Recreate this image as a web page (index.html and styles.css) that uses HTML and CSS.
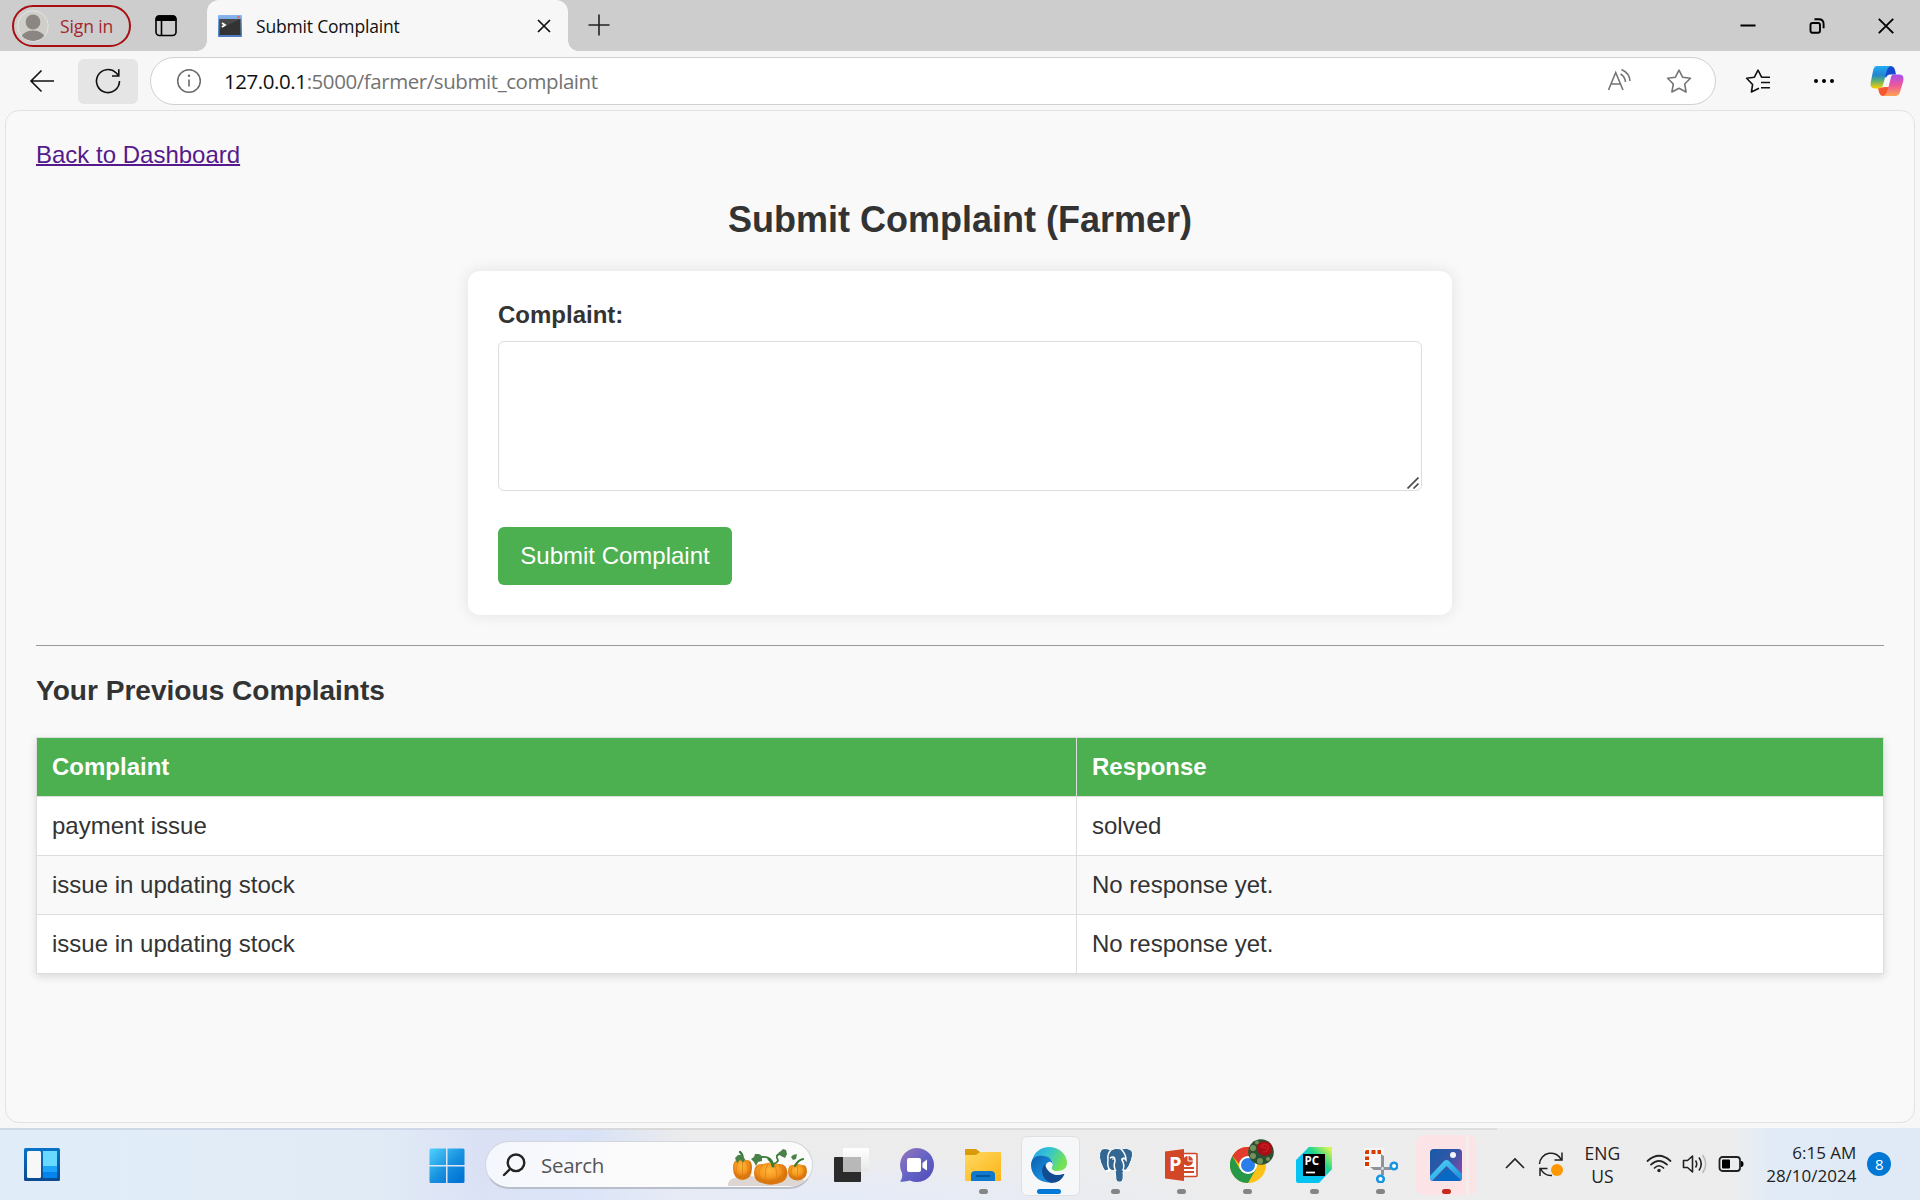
FILE: index.html
```html
<!DOCTYPE html>
<html lang="en">
<head>
<meta charset="utf-8">
<title>Submit Complaint</title>
<link rel="stylesheet" href="styles.css">
</head>
<body>
<header class="titlebar">
  <div class="signin">
    <svg class="avatar" width="32" height="32" viewBox="0 0 32 32"><defs><clipPath id="av"><circle cx="16" cy="16" r="15"/></clipPath></defs><circle cx="16" cy="16" r="15.3" fill="#d0cec9" stroke="#e6e4df"/><g clip-path="url(#av)" fill="#8b8682"><circle cx="16" cy="12" r="7.4"/><ellipse cx="16" cy="29" rx="12" ry="8.5"/></g></svg>
    <span class="ui signin-text">Sign in</span>
  </div>
  <svg class="tabs-icon" width="24" height="24" viewBox="0 0 24 24"><rect x="2" y="2" width="20" height="19.5" rx="3.5" fill="none" stroke="#000" stroke-width="1.6"/><path d="M1.5 7V5Q1.500 1.300 5 1.300H19Q22.500 1.300 22.500 5V7Z"/><path d="M7.500 6V21" stroke="#000" stroke-width="1.6"/></svg>
  <div class="tab">
    <svg width="24" height="22" viewBox="0 0 24 22"><defs><linearGradient id="fv" x2="0" y2="1"><stop stop-color="#88b8ee"/><stop offset="1" stop-color="#4878bc"/></linearGradient></defs><rect width="24" height="22" rx="1" fill="url(#fv)"/><rect x="1.500" y="4" width="21" height="16" fill="#333"/><path d="M1.500 4H22.500L1.500 14Z" fill="#484848"/><path d="M4 8L7 10L4 12" fill="none" stroke="#fff" stroke-width="1.800"/><circle cx="20.500" cy="2" r="1.200" fill="#df6264"/></svg>
    <span class="ui tab-title">Submit Complaint</span>
    <svg class="tab-close" width="16" height="16" viewBox="0 0 16 16"><path d="M2 2L14 14M14 2L2 14" stroke="#111" stroke-width="1.700"/></svg>
  </div>
  <svg class="plus" width="24" height="24" viewBox="0 0 24 24"><path d="M12 1.500V22.500M1.500 12H22.500" stroke="#222" stroke-width="1.600"/></svg>
  <div class="controls">
    <svg width="16" height="16" viewBox="0 0 16 16"><path d="M.5 7.500H15.500" stroke="#000" stroke-width="2"/></svg>
    <svg width="16" height="16" viewBox="0 0 16 16" fill="none" stroke="#000" stroke-width="1.900"><rect x="1.500" y="5" width="9.500" height="9.800" rx="2"/><path d="M5.500 1.300H9.800Q14.600 1.300 14.600 6V10.300"/></svg>
    <svg width="16" height="16" viewBox="0 0 16 16"><path d="M.8 .8L15.200 15.200M15.200 .8L.8 15.200" stroke="#000" stroke-width="1.900"/></svg>
  </div>
</header>

<nav class="toolbar">
  <svg class="back" width="26" height="24" viewBox="0 0 26 24" fill="none" stroke="#111" stroke-width="1.600"><path d="M25 12H2M12.500 1.500L2 12L12.500 22.500"/></svg>
  <div class="reload"><svg width="26" height="26" viewBox="0 0 26 26" fill="none" stroke="#111" stroke-width="1.600"><path d="M24.500 13A11.500 11.500 0 1 1 21 4.800L23.500 7.500M23.800 1.200V8H17"/></svg></div>
  <div class="address">
    <svg width="26" height="26" viewBox="0 0 26 26"><circle cx="13" cy="13" r="11.300" fill="none" stroke="#6a6a6a" stroke-width="1.500"/><path d="M13 11.500V18.500" stroke="#6a6a6a" stroke-width="1.600"/><circle cx="13" cy="7.800" r="1.200" fill="#6a6a6a"/></svg>
    <span class="ui url"><b>127.0.0.1</b>:5000/farmer/submit_complaint</span>
    <svg class="read" width="26" height="26" viewBox="0 0 26 26" fill="none" stroke="#747474" stroke-width="1.600"><path d="M1.500 22L8.700 4.500L16 22M4.200 16H13.400M13.500 6Q18 8.500 18.500 14M14.500 1.500Q22.500 5 23 13"/></svg>
    <svg width="26" height="26" viewBox="0 0 26 26" fill="none" stroke="#747474" stroke-width="1.600" stroke-linejoin="round"><path d="M13 2.200L16.600 9.200L24.400 10.300L18.700 16L20.100 24L13 20.300L5.900 24L7.300 16L1.600 10.300L9.400 9.200Z"/></svg>
  </div>
  <svg class="favs" width="26" height="26" viewBox="0 0 26 26" fill="none" stroke="#111" stroke-width="1.600" stroke-linejoin="round"><path d="M14 20.300L6.400 24L7.600 16.500L1.600 10.300L9.400 9.200L13 2.200L16.600 9.200H25M16 14.500H25M16 19.800H25"/></svg>
  <svg class="dots" width="22" height="6" viewBox="0 0 22 6"><circle cx="3" cy="3" r="2"/><circle cx="11" cy="3" r="2"/><circle cx="19" cy="3" r="2"/></svg>
  <svg class="copilot" width="34" height="32" viewBox="0 0 34 32"><defs><linearGradient id="c1" x2="0" y2="1"><stop stop-color="#21adf3"/><stop offset=".4" stop-color="#2384cf"/><stop offset=".65" stop-color="#5caf73"/><stop offset="1" stop-color="#ffcf00"/></linearGradient><linearGradient id="c2" x2="0" y2="1"><stop stop-color="#a650ee"/><stop offset=".5" stop-color="#ef579b"/><stop offset="1" stop-color="#ffa34f"/></linearGradient></defs><path d="M7 1H20Q24 1 25 5L26 9.500H20Q17 9.500 16 13L14 10Z" fill="#1649ce"/><path d="M8 23L15 22H19L16 31H13Q10 31 9 27Z" fill="#f5582f"/><path d="M7 1H21Q17.500 2 16.500 7L13 20Q12 23.500 8 23.500H5Q-1 23.500 1 16L3 6Q4 1 7 1Z" fill="url(#c1)"/><path d="M23 9.500H29Q35 9.500 33 17L30 27Q29 31 25 31H13Q16 30 17.500 26L21 12Q22 9.500 23 9.500Z" fill="url(#c2)"/></svg>
</nav>

<main class="page">
  <div><a class="back-link" href="#">Back to Dashboard</a></div>
  <h2 class="title">Submit Complaint (Farmer)</h2>
  <form class="card">
    <label class="label" for="complaint">Complaint:</label>
    <div class="field"><textarea id="complaint" class="textarea"></textarea>
      <svg class="grip" width="12" height="12" viewBox="0 0 12 12"><path d="M.5 11.500L11.500 .5M6.500 11.500L11.500 6.500" stroke="#4d4d4d" stroke-width="1.700"/></svg></div>
    <button class="submit" type="button">Submit Complaint</button>
  </form>
  <hr class="rule">
  <h3 class="subtitle">Your Previous Complaints</h3>
  <table class="table">
    <thead><tr><th class="col-complaint">Complaint</th><th>Response</th></tr></thead>
    <tbody>
      <tr><td>payment issue</td><td>solved</td></tr>
      <tr><td>issue in updating stock</td><td>No response yet.</td></tr>
      <tr><td>issue in updating stock</td><td>No response yet.</td></tr>
    </tbody>
  </table>
</main>

<footer class="taskbar">
  <svg class="widgets" width="36" height="33" viewBox="0 0 36 33"><defs><linearGradient id="w1" x2="0" y2="1"><stop stop-color="#0873c9"/><stop offset="1" stop-color="#0c4a90"/></linearGradient></defs><rect width="36" height="33" rx="1.500" fill="url(#w1)"/><rect x="3" y="3" width="14" height="27" rx="1.500" fill="#f7f7f7"/><path d="M19 3H33V18H19Z" fill="#68d9ff"/><path d="M19 18H33V24H19Z" fill="#1ba4fa"/><path d="M19 24H33V30H19Z" fill="#0584ee"/></svg>
  <svg class="start" width="36" height="36" viewBox="0 0 36 36"><defs><linearGradient id="s1" gradientUnits="userSpaceOnUse" x2="30" y2="32"><stop stop-color="#50d3fd"/><stop offset=".6" stop-color="#1791df"/><stop offset="1" stop-color="#0276d5"/></linearGradient></defs><path fill="url(#s1)" d="M2 .5H17V17H.5V2Q.5 .5 2 .5ZM18.500 .5H34Q35.500 .5 35.500 2V17H18.500ZM.5 18.500H17V35H2Q.5 35 .5 33.500ZM18.500 18.500H35.500V33.500Q35.500 35 34 35H18.500Z"/></svg>
  <div class="search">
    <svg class="magnifier" width="24" height="24" viewBox="0 0 24 24" fill="none" stroke="#222" stroke-width="2.400" stroke-linecap="round"><circle cx="14" cy="9.800" r="8.300"/><path d="M8 16L2 22"/></svg>
    <span class="ui search-text">Search</span>
    <svg class="pumpkins" width="80" height="40" viewBox="0 0 80 40"><defs><radialGradient id="pk" cx=".45" cy=".35"><stop stop-color="#ffb73c"/><stop offset=".65" stop-color="#f6981f"/><stop offset="1" stop-color="#d9740e"/></radialGradient></defs><path d="M0 39Q0 31 8 31Q12 26 22 28L30 32L54 25Q64 24 66 31Q75 31 77 34Q72 39 64 39Z" fill="#ddd6d2"/><path d="M5 21Q5 12 11 13Q14 10 18 13Q24 12 24 21Q24 32 14.500 33Q5 32 5 21Z" fill="url(#pk)"/><path d="M60 25Q60 17 65 18Q69 16 74 18Q79 17 79 25Q78 33 69.500 33.500Q61 33 60 25Z" fill="url(#pk)"/><path d="M26 26Q26 16 35 17Q42 14 50 17Q59 16 59.500 26Q59 35 50 36.500Q42 39 34 36Q26 34 26 26Z" fill="url(#pk)"/><g fill="none" stroke="#df8216" stroke-width=".8"><path d="M11 13Q6 22 11 32M17 13Q23 22 18 32M14.500 12V33M65 18Q61 25 66 33M74 18Q78 25 73 33M69.500 17V33M35 17Q27 26 35 36M40 17Q35 26 39 37M46 17Q51 26 47 37M51 17Q59 26 51 36"/></g><g fill="none" stroke="#377b37" stroke-width="2.200" stroke-linecap="round"><path d="M15 14Q15 7 12 5M67 19Q70 13 75 12"/><path d="M45 18Q43 9 34 10M45 17Q52 15 49 11Q48 7 53 7" stroke-width="1.800"/><path d="M45 19Q44 14 41 12" stroke-width="3"/></g><path d="M7 11L10 8L13 8L17 12L16 15L12 13L9 16ZM23 12L26 10L27 7L31 7L34 9L34 14L30 15L28 19L26 15ZM50 6L53 4L55 2L58 3L59 7L57 11L53 9ZM63 10L65 8L69 7L68 12L65 13Z" fill="#4a8148"/></svg>
  </div>
  <div class="apps">
    <div class="app"><svg width="36" height="36" viewBox="0 0 36 36"><defs><linearGradient id="tv" x2="0" y2="1"><stop stop-color="#fff"/><stop offset="1" stop-color="#e7e7e7"/></linearGradient></defs><rect x="1" y="10" width="27" height="25" rx="1" fill="#2b2b2b"/><rect x="10" y="1" width="26" height="24" rx="1" fill="url(#tv)"/><path d="M10 10H28V25H10Z" fill="#b8b8b8"/></svg></div>
    <div class="app"><svg width="36" height="36" viewBox="0 0 36 36"><defs><linearGradient id="tm" x2="1" y2="1"><stop stop-color="#9a74b8"/><stop offset=".5" stop-color="#6464c6"/><stop offset="1" stop-color="#5049b8"/></linearGradient></defs><path d="M18 1A17 17 0 1 1 11 33.500Q6 35 1 34.500Q4 31 3 26A17 17 0 0 1 18 1Z" fill="url(#tm)"/><rect x="8" y="11" width="14" height="14" rx="2" fill="#fff"/><path d="M23.500 16L28 12.500V23.500L23.500 20.500Z" fill="#fff"/></svg></div>
    <div class="app running"><svg width="36" height="36" viewBox="0 0 36 36"><defs><linearGradient id="fd" x2="1" y2="1"><stop stop-color="#ffd963"/><stop offset="1" stop-color="#fcb414"/></linearGradient></defs><path d="M0 3Q0 2 1 2H11L15 5V12H0Z" fill="#d99b09"/><path d="M0 8H11L15 5H35Q36 5 36 6V33Q36 34 35 34H1Q0 34 0 33Z" fill="url(#fd)"/><path d="M6 34V28Q6 24 10 24H26Q30 24 30 28V34Z" fill="#1179cb"/><path d="M11 29H25" stroke="#07569c" stroke-width="2"/></svg></div>
    <div class="app active"><svg width="36" height="36" viewBox="0 0 36 36"><defs><linearGradient id="e1" x2="1" y2=".4"><stop stop-color="#269fe9"/><stop offset=".5" stop-color="#35c5cf"/><stop offset="1" stop-color="#72e352"/></linearGradient><linearGradient id="e2" x2="1" y2="1"><stop stop-color="#0b5fad"/><stop offset=".6" stop-color="#1789d8"/></linearGradient></defs><path d="M1 14C3 5 10 0 18 0C28 0 36 7 36 16C36 21 32 24 26 24C22 24 20 22 21 20C23 17 22 12 17 11C11 8 5 9 1 14Z" fill="url(#e1)"/><path d="M0 18C0 11 6 8 12 9C18 9 22 13 22 18C20 12 15 15 14 20C13 28 19 34 25 34C12 39 0 30 0 18Z" fill="url(#e2)"/><path d="M14 17C8 23 12 33 20 36C26 36 31 33 33 28C34 27 33 27 32 27C26 30 16 27 14 17Z" fill="#124b91"/></svg></div>
    <div class="app running"><svg width="36" height="36" viewBox="0 0 36 36"><g fill="#336791" stroke="#fff" stroke-width="1"><path d="M13 3Q6 0 3 3Q-1 9 5 21Q7 26 11 22Q16 25 17 23L18 33Q19 36 23 35Q26 34 25 25Q28 24 31 19Q37 6 33 3Q29 0 23 2Q18 0 13 3Z"/><path d="M13 3Q9 7 10 13Q9 20 12 23Q8 25 9 24M12 11Q17 8 17 14Q15 20 18 24M23 2Q28 7 28 13Q25 9 24 13Q27 18 25 23Q31 25 32 22" fill="none" stroke-width="1.500"/><path d="M14 12H17M23 12H26"/></g></svg></div>
    <div class="app running"><svg width="36" height="36" viewBox="0 0 36 36"><path d="M18 6.500H32Q33 6.500 33 7.500V28.500Q33 29.500 32 29.500H18Z" fill="#fff" stroke="#d24726" stroke-width="1.600"/><circle cx="24" cy="14" r="5" fill="#d24726"/><path d="M24 14V8M24 14H30" stroke="#fff"/><path d="M20 21H30M20 25H30" stroke="#d24726" stroke-width="2"/><path d="M1 4.500L20 2V34L1 31.500Z" fill="#d24726"/><text x="5" y="24" class="ppt-letter">P</text></svg></div>
    <div class="app running"><svg width="36" height="36" viewBox="0 0 36 36"><circle cx="18" cy="18" r="18" fill="#fbc116"/><path d="M18 18L2.400 9A18 18 0 0 1 33.600 9Z" fill="#e33b2e"/><path d="M2.400 9L10.200 22.500L18 18L25.800 22.500L18 36A18 18 0 0 1 2.400 9Z" fill="#279847"/><path d="M2.400 9A18 18 0 0 1 33.600 9H18Q12 10 10 18Z" fill="#e33b2e"/><circle cx="18" cy="18" r="9" fill="#fff"/><circle cx="18" cy="18" r="7" fill="#2b7de9"/></svg>
      <svg class="profile" width="26" height="26" viewBox="0 0 26 26"><circle cx="13" cy="13" r="12.800" fill="#2d5130"/><g fill="#73915f"><circle cx="5" cy="9" r="3"/><circle cx="5" cy="17" r="3"/><circle cx="12" cy="22" r="3"/><circle cx="20" cy="20" r="2"/><circle cx="9" cy="3.500" r="2"/></g><path d="M9 6Q14 0 22 4Q26 8 23 14Q18 19 12 15Q8 12 9 6Z" fill="#a70e15"/><path d="M12 8Q16 3 20 7Q21 13 15 13M14 9Q17 7 18 10" fill="none" stroke="#c91a20" stroke-width="1.800"/></svg></div>
    <div class="app running"><svg width="36" height="36" viewBox="0 0 36 36"><defs><linearGradient id="py" x1=".3" y1=".7" x2="1" y2="0"><stop stop-color="#07c3f2"/><stop offset=".4" stop-color="#21d789"/><stop offset="1" stop-color="#fcf84a"/></linearGradient></defs><path d="M0 13L13 0H34Q36 0 36 2V22L23 36H2Q0 36 0 34Z" fill="#07c3f2"/><path d="M13 0H34Q36 0 36 2V22L27 30L8 7Z" fill="url(#py)"/><rect x="7" y="7" width="22" height="22"/><text x="8.500" y="18" class="pc-letters">PC</text><path d="M10 25.500H19" stroke="#fff" stroke-width="1.700"/></svg></div>
    <div class="app running"><svg width="36" height="36" viewBox="0 0 36 36"><rect x="2" y="1" width="20" height="21" fill="#f5f5f5"/><path d="M3 7V5Q3 3 5 3H7V7ZM9.500 3H13.500V7H9.500ZM15.500 3H19V7H15.500ZM3 9.500H7V13H3ZM3 15H7V19H3Z" fill="#d83b01"/><path d="M19 7L22 9V28H19ZM8 20H29V23H12Z" fill="#8c949b"/><circle cx="20.500" cy="21.500" r="1.400" fill="#d9dddf"/><g fill="#fff" stroke="#1896e2" stroke-width="2.600"><circle cx="32" cy="19" r="3.300"/><circle cx="18.500" cy="32" r="3.300"/></g></svg></div>
    <div class="app photos"><svg width="36" height="36" viewBox="0 0 36 36"><defs><linearGradient id="ph" x2="1" y2=".7"><stop stop-color="#165ca8"/><stop offset=".55" stop-color="#3456a8"/><stop offset="1" stop-color="#824aa9"/></linearGradient><linearGradient id="pm" x2="1" y2="1"><stop stop-color="#56d9fb"/><stop offset="1" stop-color="#148edb"/></linearGradient><clipPath id="pc"><rect x="2" y="2" width="32" height="32" rx="3.500"/></clipPath></defs><g clip-path="url(#pc)"><rect x="2" y="2" width="32" height="32" fill="url(#ph)"/><path d="M6 34L19 21L34 34Z" fill="#0869c5"/><path d="M2 29L16 14Q18.500 12 21 14L34 27V34L18.500 19L4 34H2Z" fill="url(#pm)"/><circle cx="25" cy="8" r="3" fill="#f5f3fb"/></g></svg></div>
  </div>
  <div class="tray">
    <svg class="chevron" width="20" height="12" viewBox="0 0 20 12"><path d="M1 11L10 2L19 11" fill="none" stroke="#222" stroke-width="1.600"/></svg>
    <svg class="sync" width="26" height="26" viewBox="0 0 26 26" fill="none" stroke="#222" stroke-width="1.500"><path d="M1.500 13A11.500 11.500 0 0 1 23.500 9M24 1.500V9H16.500M2 25V17.500H9.500M2.500 17.500Q6 25 14 24.500"/><circle cx="19" cy="19" r="6" fill="#ff9800" stroke="none"/></svg>
    <div class="ui lang">ENG<br>US</div>
    <svg class="wifi" width="26" height="20" viewBox="0 0 26 20" fill="none" stroke="#222" stroke-width="1.700" stroke-linecap="round"><path d="M1.500 7Q13-3.500 24.500 7M5 10.700Q13 3 21 10.700M8.500 14Q13 9.500 17.500 14"/><circle cx="13" cy="16.500" r="1.700" fill="#222" stroke="none"/></svg>
    <svg class="sound" width="26" height="22" viewBox="0 0 26 22" fill="none" stroke="#222" stroke-width="1.600" stroke-linejoin="round"><path d="M1.500 7.500H5.500L10.500 3V19L5.500 14.500H1.500ZM13.500 7.500Q16 11 13.500 14.500M17 4.500Q21.500 11 17 17.500"/><path d="M20.500 2Q27 11 20.500 20" stroke="#bbb"/></svg>
    <svg class="battery" width="26" height="18" viewBox="0 0 26 18"><rect x="1.500" y="2" width="20.500" height="14" rx="3" fill="none" stroke="#222" stroke-width="1.800"/><rect x="4" y="4.500" width="8" height="9" rx="1"/><path d="M23 6Q25.500 6 25.500 9Q25.500 12 23 12Z"/></svg>
    <div class="ui clock">6:15 AM<br>28/10/2024</div>
    <div class="ui count">8</div>
  </div>
</footer>
</body>
</html>
```
FILE: styles.css
```css
* { box-sizing: border-box; }
body { margin: 0; width: 1920px; height: 1200px; overflow: hidden; display: flex; flex-direction: column; background: #f7f7f7; font-family: "Liberation Sans", Arial, sans-serif; color: #333; }
svg { display: block; flex: none; }
.ui { font-family: "Open Sans", "Noto Sans", sans-serif; white-space: nowrap; }

.titlebar { height: 51px; flex: none; display: flex; background: #cdcdcd; }
.signin { display: flex; align-items: center; width: 119px; height: 42px; margin: 5px 0 0 12px; padding: 0 0 1px 3px; border: 2px solid #a80f12; border-radius: 21px; }
.signin-text { margin-left: 11px; font-size: 17.500px; letter-spacing: -.1px; color: #a4262c; }
.tabs-icon { margin: 14px 0 0 23px; }
.tab { position: relative; display: flex; align-items: center; width: 361px; height: 51px; margin-left: 29px; padding: 0 16px 0 11px; background: #f7f7f7; border-radius: 12px 12px 0 0; }
.tab::before, .tab::after { content: ""; position: absolute; bottom: 0; width: 10px; height: 10px; }
.tab::before { left: -10px; background: radial-gradient(circle at 0 0, transparent 9.500px, #f7f7f7 10px); }
.tab::after { right: -10px; background: radial-gradient(circle at 100% 0, transparent 9.500px, #f7f7f7 10px); }
.tab-title { margin-left: 14px; font-size: 17.500px; letter-spacing: -.18px; color: #111; }
.tab-close { margin-left: auto; }
.plus { margin: 13px 0 0 19px; }
.controls { display: flex; gap: 53px; margin: 18px 26.500px 0 auto; }

.toolbar { height: 59px; flex: none; display: flex; align-items: center; padding: 1px 16px 0 29px; }
.reload { display: flex; align-items: center; justify-content: center; width: 60px; height: 45px; margin-left: 23px; background: #e5e5e5; border-radius: 6px; }
.address { display: flex; align-items: center; width: 1566px; height: 48px; margin-left: 12px; padding: 0 23px 0 25px; background: #fff; border: 1.500px solid #d0d0d0; border-radius: 24px; }
.url { margin-left: 22px; font-size: 20.500px; letter-spacing: -.43px; color: #737373; }
.url b { font-weight: 400; color: #111; }
.read { margin: 0 33px 0 auto; }
.favs { margin-left: 29px; }
.dots { margin-left: 42px; }
.copilot { margin-left: auto; }

.page { height: 1013px; flex: none; margin: 0 5px; padding: 30px; background: #f9f9f9; border: 1px solid #e2e2e2; border-radius: 14px; font-size: 24px; line-height: 27px; }
.back-link { color: #551a8b; text-decoration-thickness: 2px; }
.title { margin: 31px 0; font-size: 36px; line-height: 41px; text-align: center; }
.card { width: 984px; height: 344px; margin: 0 auto; padding: 30px; background: #fff; border-radius: 12px; box-shadow: 0 0 15px rgba(0, 0, 0, .1); }
.label { display: block; margin-bottom: 13px; font-weight: 700; }
.field { position: relative; height: 150px; margin-bottom: 36px; }
.textarea { display: block; width: 100%; height: 150px; border: 1px solid #ddd; border-radius: 6px; background: #fff; resize: none; }
.grip { position: absolute; right: 3px; bottom: 2px; }
.submit { display: block; width: 234px; height: 58px; padding: 0; border: 0; border-radius: 6px; background: #4caf50; color: #fff; font: 24px "Liberation Sans", Arial, sans-serif; }
.rule { height: 1px; margin: 30px 0 29px; border: 0; background: #999; }
.subtitle { margin: 0 0 31px; font-size: 28.080px; line-height: 31px; }
.table { width: 1848px; border-collapse: collapse; table-layout: fixed; background: #fff; box-shadow: 0 3px 8px rgba(0, 0, 0, .13); }
.table th, .table td { height: 59px; padding: 0 15px 2px; border: 1px solid #ddd; text-align: left; }
.table th { background: #4caf50; color: #fff; }
.table tr:nth-child(even) td { background: #f9f9f9; }
.col-complaint { width: 1040px; }

.taskbar { display: flex; align-items: flex-start; height: 72px; flex: none; margin-top: 5px; background: linear-gradient(to right, #cfd9e5, #d0d7e9 430px, #d9d9d9 650px, #dedede 1497px, transparent 1497px) 0 0 / 100% 2px no-repeat, radial-gradient(ellipse 420px 50px at 820px 76px, rgba(226, 234, 253, .8), rgba(226, 234, 253, 0)), linear-gradient(to right, #e0edf8, #e1ebf6 380px, #dbe1f5 480px, #d8e2f6 590px, #ececec 690px, #ededed 1730px, #e0ebf7 1775px, #e0eaf6); }
.widgets { margin: 20px 0 0 24px; }
.start { margin: 20px 0 0 369px; }
.search { display: flex; width: 328px; height: 48px; margin: 13px 0 0 20px; background: linear-gradient(to right, #f4f7fd, #fcfbfb 50%); border: 1.500px solid #d3d6dd; border-bottom: 2px solid #b8bfca; border-radius: 24px; }
.magnifier { margin: 11px 0 0 16px; }
.search-text { width: 70px; margin: 10px 0 0 15px; font-size: 20.500px; letter-spacing: -.3px; line-height: 27px; color: #555; }
.pumpkins { margin: 5px 0 0 117px; }
.apps { display: flex; margin-left: 5px; }
.app { position: relative; display: flex; justify-content: center; width: 66.150px; height: 72px; padding-top: 19px; }
.app > svg:first-child { z-index: 1; }
.app.running::after, .app.active::after, .app.photos::after { content: ""; position: absolute; z-index: 1; left: 50%; top: 61px; width: 9px; height: 5px; margin-left: -4.500px; border-radius: 3px; background: #858585; }
.app.active::after { width: 24px; margin-left: -12px; background: #0078d7; }
.app.photos::after { background: #c42b1c; }
.app.active::before { content: ""; position: absolute; left: 4.500px; top: 8px; width: 57px; height: 58px; border: 1px solid #e0e0e0; border-radius: 6px; background: #f6f7f8; }
.app.photos::before { content: ""; position: absolute; left: 3px; top: 7px; width: 60px; height: 60px; border-radius: 7px; background: linear-gradient(to right, #fce4e6 50px, #f7ecec 50px, #f7ecec 53px, #fce4e6 53px); }
.profile { position: absolute; z-index: 2; left: 33px; top: 11px; }
.ppt-letter { font: 700 20px "Open Sans", sans-serif; fill: #fff; }
.pc-letters { font: 700 11.500px "Open Sans", sans-serif; fill: #fff; }
.tray { display: flex; align-items: flex-start; width: 414px; margin-left: 26px; }
.chevron { margin-top: 29px; }
.sync { margin: 23px 0 0 13px; }
.lang { width: 50px; margin: 14px 0 0 13px; font-size: 17.500px; line-height: 22.500px; text-align: center; color: #222; }
.wifi { margin: 26px 0 0 19px; }
.sound { margin: 25px 0 0 10px; }
.battery { margin: 27px 0 0 10px; }
.clock { width: 100px; margin: 13px 0 0 12px; font-size: 17px; line-height: 23px; text-align: right; color: #222; }
.count { width: 24px; height: 24px; margin: 24px 0 0 11px; border-radius: 50%; background: #0078d4; color: #fff; font-size: 15px; line-height: 24px; text-align: center; }
```
